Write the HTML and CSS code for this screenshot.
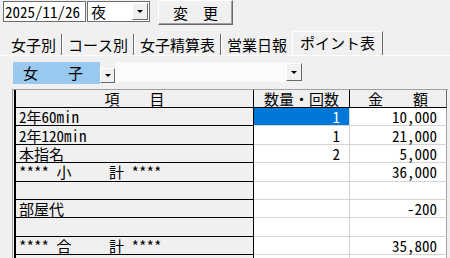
FILE: index.html
```html
<!DOCTYPE html>
<html lang="ja">
<head>
    <meta charset="UTF-8">
    <title>ポイント表</title>
    <link rel="stylesheet" href="styles.css">
</head>
<body>
    <div class="toolbar">
        <div class="field date">2025/11/26</div>
        <div class="field combo"><span>夜</span><span class="drop big"></span></div>
        <div class="btn">変　更</div>
    </div>

    <div class="tabs">
        <div class="tab">女子別</div>
        <div class="tab">コース別</div>
        <div class="tab">女子精算表</div>
        <div class="tab">営業日報</div>
        <div class="tab active">ポイント表</div>
    </div>

    <div class="panel">
        <div class="filter">
            <div class="girl">女　　子</div>
            <span class="drop small"></span>
            <div class="blank"></div>
            <span class="drop tall"></span>
        </div>

        <div class="grid-wrap">
            <div class="grid">
                <div class="hd item-h">項　　目</div>
                <div class="hd">数量・回数</div>
                <div class="hd last">金　　額</div>

                <div class="item">2年60min</div>
                <div class="qty selected">1</div>
                <div class="amt">10,000</div>

                <div class="item">2年120min</div>
                <div class="qty">1</div>
                <div class="amt">21,000</div>

                <div class="item">本指名</div>
                <div class="qty">2</div>
                <div class="amt">5,000</div>

                <div class="item">**** 小　　 計 ****</div>
                <div class="qty"></div>
                <div class="amt">36,000</div>

                <div class="item"></div>
                <div class="qty"></div>
                <div class="amt"></div>

                <div class="item">部屋代</div>
                <div class="qty"></div>
                <div class="amt">-200</div>

                <div class="item"></div>
                <div class="qty"></div>
                <div class="amt"></div>

                <div class="item">**** 合　　 計 ****</div>
                <div class="qty"></div>
                <div class="amt">35,800</div>

                <div class="item"></div>
                <div class="qty"></div>
                <div class="amt"></div>
            </div>
        </div>
    </div>
</body>
</html>
```

FILE: styles.css
```css
body {
    margin: 0;
    width: 450px;
    height: 258px;
    overflow: hidden;
    background-color: #f0f0f0;
    font-family: "Noto Sans Mono CJK JP", "Noto Sans CJK JP", monospace;
    font-size: 15px;
    color: #000;
}

/* top controls */
.toolbar {
    display: flex;
    align-items: flex-start;
    height: 25px;
    padding-left: 3px;
}

.field {
    background-color: #fff;
    border: 1px solid #6d6d6d;
    height: 19px;
    line-height: 19px;
    margin-top: 1px;
}

.date {
    width: 80px;
    padding-left: 1px;
}

.combo {
    display: flex;
    justify-content: space-between;
    align-items: center;
    width: 58px;
    padding-left: 3px;
    margin-left: 1px;
}

.combo .drop {
    margin-right: 1px;
}

.btn {
    margin-left: 8px;
    width: 73px;
    height: 23px;
    line-height: 23px;
    text-align: center;
    border: 1px solid;
    border-color: #fff #696969 #696969 #fff;
    box-shadow: inset -1px -1px 0 #a0a0a0;
}

.drop {
    display: flex;
    justify-content: center;
    align-items: center;
    width: 13px;
    height: 13px;
    background-color: #f0f0f0;
    border: 1px solid;
    border-color: #fff #696969 #696969 #fff;
}

.drop::after {
    content: "";
    border-left: 3px solid transparent;
    border-right: 3px solid transparent;
    border-top: 3px solid #000;
}

.drop.big {
    width: 14px;
    height: 15px;
}

/* tabs */
.tabs {
    display: flex;
    align-items: flex-end;
    height: 24px;
    margin-top: 6px;
    padding-left: 5px;
}

.tab {
    height: 21px;
    line-height: 21px;
    padding: 0 5px;
    border-left: 1px solid #fff;
    border-right: 1px solid #696969;
    white-space: nowrap;
}

.tab:first-child {
    border-left-color: transparent;
}

.tab.active {
    height: 24px;
    line-height: 22px;
    padding: 0 7px;
    margin-left: -1px;
    border-top: 1px solid #fff;
    box-sizing: border-box;
}

/* panel */
.panel {
    border-top: 1px solid #fff;
}

.filter {
    display: flex;
    align-items: flex-start;
    padding: 6px 0 0 13px;
}

.girl {
    width: 77px;
    height: 22px;
    line-height: 22px;
    padding-left: 10px;
    background-color: #99c9ef;
}

.drop.small {
    margin-top: 6px;
}

.blank {
    width: 171px;
    height: 20px;
    background-color: #fbfbfb;
}

.drop.tall {
    margin-top: 1px;
    width: 14px;
    height: 16px;
}

/* grid */
.grid-wrap {
    margin: 5px 0 0 12px;
    width: 434px;
    border-top: 1px solid #a0a0a0;
    border-left: 1px solid #a0a0a0;
    padding-left: 1px;
}

.grid {
    display: grid;
    grid-template-columns: 238px 96px 97px;
    grid-template-rows: 18px repeat(9, 18.4px);
    border-left: 2px solid #000;
}

.grid > div {
    box-sizing: border-box;
    white-space: nowrap;
    display: flex;
    align-items: center;
    line-height: 1;
}

.hd {
    justify-content: center;
    border-right: 1px solid #000;
    border-bottom: 1px solid #000;
}

.hd.last {
    border-right-color: #696969;
}

.item {
    padding-left: 3px;
    border-right: 1px solid #000;
    border-bottom: 1px solid #000;
}

.qty,
.amt {
    justify-content: flex-end;
    background-color: #fff;
    padding-right: 9px;
    border-right: 1px solid #d4d4d4;
    border-bottom: 1px solid #d4d4d4;
}

.amt {
    border-right-color: #a0a0a0;
}

.qty.selected {
    background-color: #0078d7;
    color: #fff;
}
```
